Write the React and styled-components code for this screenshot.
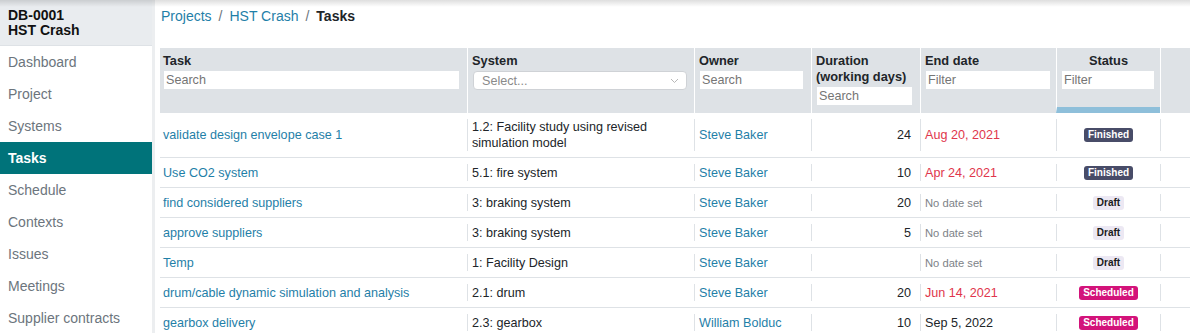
import React from "react";
import styled, { createGlobalStyle } from "styled-components";

const Global = createGlobalStyle`
  html, body { margin: 0; padding: 0; background: #fff; }
  body { font-family: "Liberation Sans", Arial, sans-serif; color: #212529; }
  * { box-sizing: border-box; }
`;

const Page = styled.div`
  display: flex;
  width: 1190px;
  height: 333px;
  overflow: hidden;
  position: relative;
  &::before {
    content: "";
    position: absolute;
    top: 0; left: 0; right: 0;
    height: 7px;
    background: linear-gradient(rgba(0,0,0,0.13), rgba(0,0,0,0));
    pointer-events: none;
    z-index: 2;
  }
`;

const Sidebar = styled.nav`
  width: 155px;
  flex: none;
  border-right: 3px solid #eceef0;
  display: flex;
  flex-direction: column;
`;

const SideHead = styled.div`
  height: 46px;
  background: #e9ecef;
  border-bottom: 1px solid #dee2e6;
  padding: 8px 8px 0;
  font-size: 14px;
  font-weight: bold;
  line-height: 15px;
  color: #111;
`;

const NavItem = styled.div`
  height: 32px;
  display: flex;
  align-items: center;
  padding: 1px 8px 0;
  font-size: 14px;
  color: ${(p) => (p.$active ? "#fff" : "#6c757d")};
  font-weight: ${(p) => (p.$active ? "bold" : "normal")};
  background: ${(p) => (p.$active ? "#00737a" : "transparent")};
`;

const Main = styled.main`
  flex: 1;
  min-width: 0;
  padding-left: 5px;
  overflow: hidden;
`;

const Crumbs = styled.div`
  height: 48px;
  padding: 8px 0 0 1px;
  font-size: 14px;
  line-height: 16px;
  display: flex;
`;

const CrumbLink = styled.span`
  color: #1f80a8;
`;

const CrumbSep = styled.span`
  color: #6c757d;
  padding: 0 7px;
`;

const CrumbCurrent = styled.span`
  font-weight: bold;
  color: #212529;
`;

const Table = styled.div`
  width: 1100px;
  font-size: 12.6px;
`;

const HeadRow = styled.div`
  display: flex;
  height: 65px;
  background: #dee2e6;
`;

const HeadCell = styled.div`
  width: ${(p) => p.$w}px;
  flex: none;
  padding: 5px ${(p) => (p.$first ? 3 : 4)}px 0;
  border-left: ${(p) => (p.$first ? "none" : "1px solid #fff")};
  border-bottom: ${(p) => (p.$sorted ? "6px solid #8ebfda" : "none")};
  display: flex;
  flex-direction: column;
  align-items: flex-start;
`;

const HeadLabel = styled.div`
  font-weight: bold;
  font-size: 12.8px;
  line-height: 16px;
  color: #212529;
  align-self: ${(p) => (p.$center ? "stretch" : "auto")};
  text-align: ${(p) => (p.$center ? "center" : "left")};
`;

const FilterInput = styled.input`
  width: ${(p) => p.$w}px;
  height: 18px;
  margin: 2px 0 0 1px;
  border: none;
  outline: none;
  background: #fff;
  padding: 0 2px;
  font-family: "Liberation Sans", Arial, sans-serif;
  font-size: 12.6px;
  color: #212529;
  &::placeholder { color: #757575; }
`;

const Select = styled.div`
  width: 214px;
  height: 19px;
  margin: 2px 0 0 1px;
  background: #fff;
  border: 1px solid #cfd2d6;
  border-radius: 4px;
  display: flex;
  align-items: center;
  justify-content: space-between;
  padding: 0 7px 0 8px;
  color: #8a8a8a;
  font-size: 12.6px;
`;

const Row = styled.div`
  display: flex;
  padding: 6px 0;
  border-bottom: 1px solid #dee2e6;
`;

const Cell = styled.div`
  width: ${(p) => p.$w}px;
  flex: none;
  min-height: 17px;
  line-height: 16px;
  padding: 0 ${(p) => (p.$right ? 9 : 4)}px 0 ${(p) => (p.$first ? 3 : 4)}px;
  border-left: ${(p) => (p.$first ? "none" : "1px solid #dee2e6")};
  display: flex;
  align-items: center;
  justify-content: ${(p) => (p.$right ? "flex-end" : p.$center ? "center" : "flex-start")};
  color: #212529;
`;

const Link = styled.span`
  color: #1f80a8;
`;

const DateText = styled.span`
  color: ${(p) => (p.$late ? "#e0364c" : "#212529")};
`;

const NoDate = styled.span`
  color: #7d8287;
  font-size: 11.2px;
`;

const badgeColors = {
  Finished: { bg: "#484c68", fg: "#fff" },
  Draft: { bg: "#ece8f3", fg: "#1a1a1a" },
  Scheduled: { bg: "#d3137a", fg: "#fff" },
};

const Badge = styled.span`
  display: inline-block;
  font-size: 10px;
  font-weight: bold;
  line-height: 14px;
  padding: 0 4px;
  border-radius: 3px;
  background: ${(p) => badgeColors[p.$s].bg};
  color: ${(p) => badgeColors[p.$s].fg};
`;

const W = { task: 307, system: 227, owner: 117, dur: 109, end: 136, status: 104, extra: 100 };

const rows = [
  ["validate design envelope case 1", "1.2: Facility study using revised simulation model", "Steve Baker", "24", "Aug 20, 2021", true, "Finished"],
  ["Use CO2 system", "5.1: fire system", "Steve Baker", "10", "Apr 24, 2021", true, "Finished"],
  ["find considered suppliers", "3: braking system", "Steve Baker", "20", null, false, "Draft"],
  ["approve suppliers", "3: braking system", "Steve Baker", "5", null, false, "Draft"],
  ["Temp", "1: Facility Design", "Steve Baker", "", null, false, "Draft"],
  ["drum/cable dynamic simulation and analysis", "2.1: drum", "Steve Baker", "20", "Jun 14, 2021", true, "Scheduled"],
  ["gearbox delivery", "2.3: gearbox", "William Bolduc", "10", "Sep 5, 2022", false, "Scheduled"],
];

const nav = ["Dashboard", "Project", "Systems", "Tasks", "Schedule", "Contexts", "Issues", "Meetings", "Supplier contracts"];

export default function App() {
  return (
    <>
      <Global />
      <Page>
        <Sidebar>
          <SideHead>
            DB-0001
            <br />
            HST Crash
          </SideHead>
          {nav.map((n) => (
            <NavItem key={n} $active={n === "Tasks"}>
              {n}
            </NavItem>
          ))}
        </Sidebar>
        <Main>
          <Crumbs>
            <CrumbLink>Projects</CrumbLink>
            <CrumbSep>/</CrumbSep>
            <CrumbLink>HST Crash</CrumbLink>
            <CrumbSep>/</CrumbSep>
            <CrumbCurrent>Tasks</CrumbCurrent>
          </Crumbs>
          <Table>
            <HeadRow>
              <HeadCell $w={W.task} $first>
                <HeadLabel>Task</HeadLabel>
                <FilterInput $w={295} placeholder="Search" />
              </HeadCell>
              <HeadCell $w={W.system}>
                <HeadLabel>System</HeadLabel>
                <Select>
                  <span>Select...</span>
                  <svg width="9" height="6" viewBox="0 0 9 6">
                    <path d="M1 1l3.5 3.5L8 1" fill="none" stroke="#b8b8b8" strokeWidth="1" />
                  </svg>
                </Select>
              </HeadCell>
              <HeadCell $w={W.owner}>
                <HeadLabel>Owner</HeadLabel>
                <FilterInput $w={103} placeholder="Search" />
              </HeadCell>
              <HeadCell $w={W.dur}>
                <HeadLabel>
                  Duration
                  <br />
                  (working days)
                </HeadLabel>
                <FilterInput $w={95} placeholder="Search" />
              </HeadCell>
              <HeadCell $w={W.end}>
                <HeadLabel>End date</HeadLabel>
                <FilterInput $w={124} placeholder="Filter" />
              </HeadCell>
              <HeadCell $w={W.status} $sorted>
                <HeadLabel $center>Status</HeadLabel>
                <FilterInput $w={92} placeholder="Filter" />
              </HeadCell>
              <HeadCell $w={W.extra} />
            </HeadRow>
            {rows.map((r, i) => (
              <Row key={i}>
                <Cell $w={W.task} $first>
                  <Link>{r[0]}</Link>
                </Cell>
                <Cell $w={W.system}>{r[1]}</Cell>
                <Cell $w={W.owner}>
                  <Link>{r[2]}</Link>
                </Cell>
                <Cell $w={W.dur} $right>
                  {r[3]}
                </Cell>
                <Cell $w={W.end}>
                  {r[4] ? <DateText $late={r[5]}>{r[4]}</DateText> : <NoDate>No date set</NoDate>}
                </Cell>
                <Cell $w={W.status} $center>
                  <Badge $s={r[6]}>{r[6]}</Badge>
                </Cell>
                <Cell $w={W.extra} />
              </Row>
            ))}
          </Table>
        </Main>
      </Page>
    </>
  );
}
